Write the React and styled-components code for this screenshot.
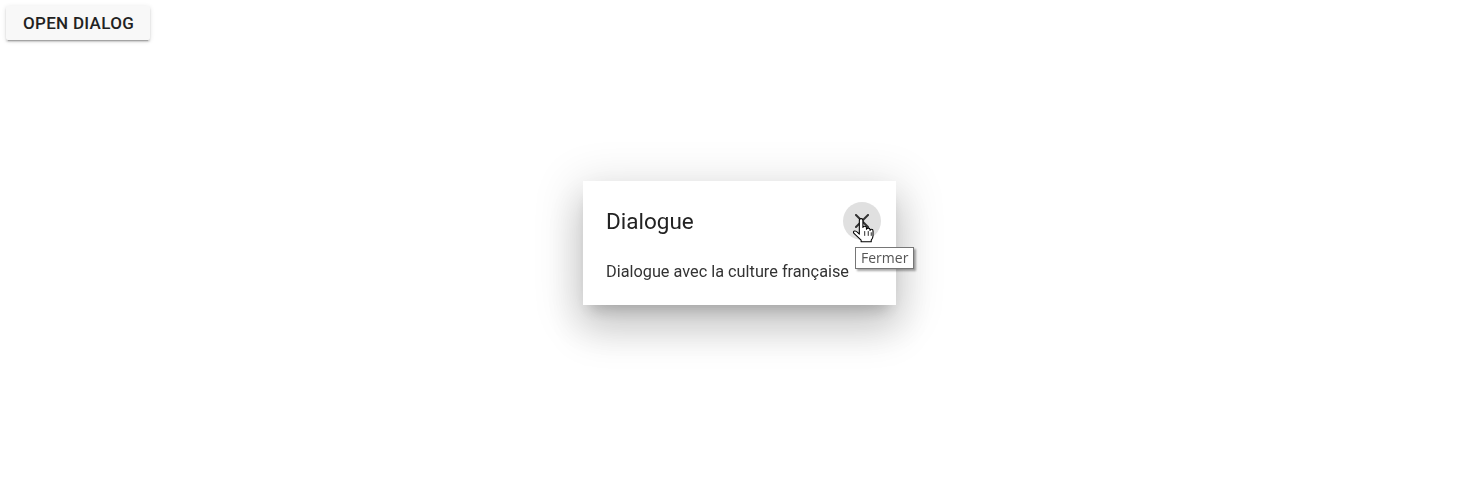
import React from "react";
import styled, { createGlobalStyle } from "styled-components";

const GlobalStyle = createGlobalStyle`
  html, body {
    margin: 0;
    padding: 0;
    background: #fff;
    font-family: Roboto, "Liberation Sans", sans-serif;
  }
`;

const Page = styled.div`
  padding: 6px;
  width: 1480px;
  height: 483px;
  box-sizing: border-box;
`;

const OpenButton = styled.button`
  height: 34px;
  padding: 0 16px 0 17px;
  border: none;
  border-radius: 2px;
  background: #f8f8f8;
  color: #222;
  font-family: Roboto, "Liberation Sans", sans-serif;
  font-size: 17px;
  font-weight: 500;
  letter-spacing: 0.3px;
  text-transform: uppercase;
  box-shadow: 0 3px 1px -2px rgba(0, 0, 0, 0.2), 0 2px 2px 0 rgba(0, 0, 0, 0.14),
    0 1px 5px 0 rgba(0, 0, 0, 0.12);
  cursor: pointer;
`;

const Overlay = styled.div`
  position: fixed;
  inset: 0;
  padding: 3px 1px 0 0;
  display: flex;
  align-items: center;
  justify-content: center;
  pointer-events: none;
`;

const Dialog = styled.div`
  position: relative;
  width: 313px;
  box-sizing: border-box;
  background: #fff;
  padding: 21px 15px 21px 23px;
  box-shadow: 0 11px 15px -7px rgba(0, 0, 0, 0.2), 0 24px 38px 3px rgba(0, 0, 0, 0.14),
    0 9px 46px 8px rgba(0, 0, 0, 0.12);
  pointer-events: auto;
`;

const TitleRow = styled.div`
  display: flex;
  align-items: center;
  justify-content: space-between;
  height: 38px;
`;

const Title = styled.h2`
  margin: 0;
  font-size: 22.5px;
  font-weight: 400;
  color: #222;
  line-height: 1;
`;

const CloseButton = styled.button`
  position: relative;
  width: 38px;
  height: 38px;
  border: none;
  border-radius: 50%;
  background: #e0e0e0;
  display: flex;
  align-items: center;
  justify-content: center;
  padding: 0;
  cursor: pointer;
`;

const Content = styled.p`
  margin: 20px 0 0;
  font-size: 16.3px;
  line-height: 24px;
  color: #333;
`;

const Cursor = styled.svg`
  position: absolute;
  left: 9px;
  top: 16px;
`;

const Tooltip = styled.div`
  position: absolute;
  left: 272px;
  top: 66px;
  height: 22px;
  padding: 0 5px;
  box-sizing: border-box;
  border: 1px solid #767676;
  background: #fff;
  color: #555;
  font-family: "Open Sans", "Noto Sans", sans-serif;
  font-size: 14px;
  line-height: 20px;
  white-space: nowrap;
  box-shadow: 2px 2px 2px rgba(0, 0, 0, 0.35);
`;

const CloseIcon = () => (
  <svg width="14" height="14" viewBox="0 0 14 14">
    <path d="M1 1 L13 13 M13 1 L1 13" stroke="#333" strokeWidth="2" strokeLinecap="square" />
  </svg>
);

const HandCursor = () => (
  <Cursor width="23" height="25" viewBox="0 0 19 21">
    <path
      d="M6 2 Q6 0.5 7.5 0.5 Q9 0.5 9 2 V8 Q9 7 10.5 7 Q12 7 12 8.5 V9.5 Q12 8.5 13.5 8.5 Q15 8.5 15 10 V10.5 Q15 9.5 16.3 9.5 Q17.5 9.5 17.5 11 V15 Q17.5 17 16 18.5 V20 H7.5 V18.5 L1.5 13 Q0.5 11.5 1.8 11 Q3 10.5 4.5 12 L6 13.5 Z"
      fill="#fff"
      stroke="#000"
      strokeWidth="0.9"
      strokeLinejoin="round"
    />
    <path d="M10.5 11 V15 M13.5 11 V15 M16 12 V15" stroke="#000" strokeWidth="0.7" />
  </Cursor>
);

const App = () => {
  return (
    <Page>
      <GlobalStyle />
      <OpenButton>Open Dialog</OpenButton>
      <Overlay>
        <Dialog>
          <TitleRow>
            <Title>Dialogue</Title>
            <CloseButton aria-label="Fermer">
              <CloseIcon />
              <HandCursor />
            </CloseButton>
          </TitleRow>
          <Content>Dialogue avec la culture française</Content>
          <Tooltip>Fermer</Tooltip>
        </Dialog>
      </Overlay>
    </Page>
  );
};

export default App;
